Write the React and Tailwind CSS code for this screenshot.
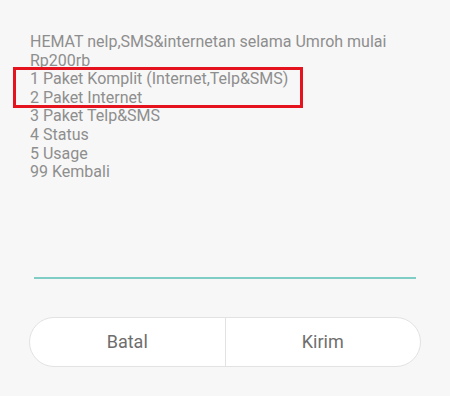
export default function App() {
  const lines = [
    'HEMAT nelp,SMS&internetan selama Umroh mulai',
    'Rp200rb',
    '1 Paket Komplit (Internet,Telp&SMS)',
    '2 Paket Internet',
    '3 Paket Telp&SMS',
    '4 Status',
    '5 Usage',
    '99 Kembali',
  ];

  return (
    <div className="relative w-[450px] h-[396px] bg-[#f7f7f7] font-['Roboto',sans-serif] overflow-hidden">
      {/* message */}
      <div className="pt-[33px] pl-[30px] text-[16px] leading-[18.6px] text-[#8e8e8e]">
        {lines.map((line) => (
          <div key={line}>{line}</div>
        ))}
      </div>

      {/* input */}
      <div className="mt-[95px] mx-[34px] h-[2px] bg-[#7fcdc4]" />

      {/* buttons */}
      <div className="mt-[38px] mx-[29px] h-[50px] flex rounded-full border border-[#e2e2e2] bg-white text-[18px] text-[#6e6e6e]">
        <button className="flex-1 flex items-center justify-center">Batal</button>
        <div className="w-px bg-[#e2e2e2]" />
        <button className="flex-1 flex items-center justify-center">Kirim</button>
      </div>

      {/* annotation */}
      <div className="absolute left-[13px] top-[67px] w-[290px] h-[41px] border-[3px] border-[#e5131d]" />
    </div>
  );
}
